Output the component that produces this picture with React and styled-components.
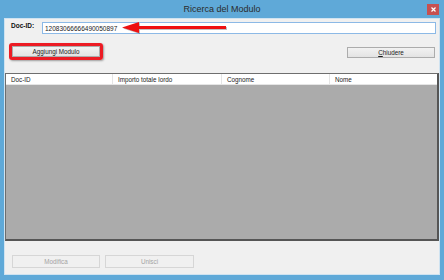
import styled, { createGlobalStyle } from "styled-components";

const GlobalStyle = createGlobalStyle`
	html, body {
		margin: 0;
		padding: 0;
		background: #5fa9d8;
	}
	* {
		box-sizing: border-box;
	}
`;

const columns = ["Doc-ID", "Importo totale lordo", "Cognome", "Nome"];

const App = () => {
	return (
		<>
			<GlobalStyle />
			<Window>
				<TitleBar>
					<span />
					<Title>Ricerca del Modulo</Title>
					<CloseButton aria-label="close">
						<svg width="5" height="5" viewBox="0 0 5 5">
							<path d="M0.5 0.5 L4.5 4.5 M4.5 0.5 L0.5 4.5" stroke="#fff" strokeWidth="1.2" />
						</svg>
					</CloseButton>
				</TitleBar>
				<Frame>
					<Client>
						<IdRow>
							<Label>Doc-ID:</Label>
							<IdInput value="12083066666490050897" readOnly />
							<Arrow width="108" height="14" viewBox="0 0 108 14">
								<g transform="translate(1,1)">
									<path d="M0 5.5 L17 0 L17 4 L104 4 L104 7 L17 7 L17 11 Z" fill="rgba(0,0,0,0.25)" transform="translate(1,1)" />
									<path d="M0 5.5 L17 0 L17 4 L104 4 L104 7 L17 7 L17 11 Z" fill="#ee1010" />
								</g>
							</Arrow>
						</IdRow>

						<ActionRow>
							<Highlight>
								<Button>Aggiungi Modulo</Button>
							</Highlight>
							<Button $offset>
								<u>C</u>hiudere
							</Button>
						</ActionRow>

						<List>
							<Header>
								{columns.map((c) => (
									<HeaderCell key={c}>{c}</HeaderCell>
								))}
							</Header>
							<ListBody />
						</List>

						<Footer>
							<Button disabled $wide="88px">Modifica</Button>
							<Button disabled $wide="89px">Unisci</Button>
						</Footer>
					</Client>
				</Frame>
			</Window>
		</>
	);
};

const Window = styled.div`
	width: 444px;
	height: 280px;
	display: flex;
	flex-direction: column;
	background: #5fa9d8;
	font-family: "Liberation Sans", Arial, sans-serif;
`;

const TitleBar = styled.div`
	height: 19px;
	display: grid;
	grid-template-columns: 1fr auto 1fr;
	align-items: start;
`;

const Title = styled.div`
	font-size: 9px;
	line-height: 19px;
	color: #2b2b2b;
`;

const CloseButton = styled.div`
	justify-self: end;
	margin: 4px 5px 0 0;
	width: 12px;
	height: 11px;
	background: #c75050;
	display: flex;
	align-items: center;
	justify-content: center;
`;

const Frame = styled.div`
	flex: 1;
	display: flex;
	padding: 0 5px 6px 5px;
`;

const Client = styled.div`
	flex: 1;
	display: flex;
	flex-direction: column;
	background: #f0f0f0;
	box-shadow: 0 0 0 1px #cfe3f1;
`;

const IdRow = styled.div`
	position: relative;
	display: flex;
	align-items: flex-start;
	padding: 3px 3px 0 6px;
`;

const Label = styled.div`
	width: 31px;
	font-size: 6.5px;
	font-weight: bold;
	color: #111;
	line-height: 8px;
`;

const IdInput = styled.input`
	flex: 1;
	height: 12px;
	margin: 0;
	padding: 0 2px;
	border: 1px solid #8cb9e6;
	outline: none;
	background: #fff;
	font-family: "Liberation Sans", Arial, sans-serif;
	font-size: 6.5px;
	color: #222;
`;

const Arrow = styled.svg`
	position: absolute;
	left: 116px;
	top: 2px;
`;

const ActionRow = styled.div`
	display: flex;
	justify-content: space-between;
	align-items: flex-start;
	margin-top: 9px;
	padding: 0 4px;
`;

const Highlight = styled.div`
	display: flex;
	border: 3px solid #ec1b24;
	border-radius: 3px;
	box-shadow: 1px 1px 2px rgba(0, 0, 0, 0.35);
`;

const Button = styled.button`
	width: ${(p) => p.$wide || "88px"};
	height: ${(p) => (p.disabled ? "13px" : "11px")};
	margin: ${(p) => (p.$offset ? "4px 0 0 0" : "0")};
	padding: 0;
	border: 1px solid ${(p) => (p.disabled ? "#d6d6d6" : "#acacac")};
	background: ${(p) =>
		p.disabled ? "#f0f0f0" : "linear-gradient(#f2f2f2, #e3e3e3)"};
	font-family: "Liberation Sans", Arial, sans-serif;
	font-size: 6.3px;
	line-height: 9px;
	color: ${(p) => (p.disabled ? "#a3a3a3" : "#1a1a1a")};
	u {
		text-decoration: underline;
	}
`;

const List = styled.div`
	margin-top: 13px;
	height: 168px;
	display: flex;
	flex-direction: column;
	border: 1px solid #6e6e6e;
	border-right-width: 2px;
	border-bottom-width: 2px;
	border-right-color: #555;
	border-bottom-color: #555;
`;

const Header = styled.div`
	height: 11px;
	display: grid;
	grid-template-columns: 107px 109px 108px 1fr;
	background: #fff;
	border-bottom: 1px solid #e5e5e5;
`;

const HeaderCell = styled.div`
	padding-left: 5px;
	font-size: 6.3px;
	line-height: 11px;
	color: #222;
	border-right: 1px solid #e5e5e5;
	&:last-child {
		border-right: none;
	}
`;

const ListBody = styled.div`
	flex: 1;
	background: #ababab;
`;

const Footer = styled.div`
	flex: 1;
	display: flex;
	gap: 5px;
	padding: 14px 0 0 7px;
`;

export default App;
